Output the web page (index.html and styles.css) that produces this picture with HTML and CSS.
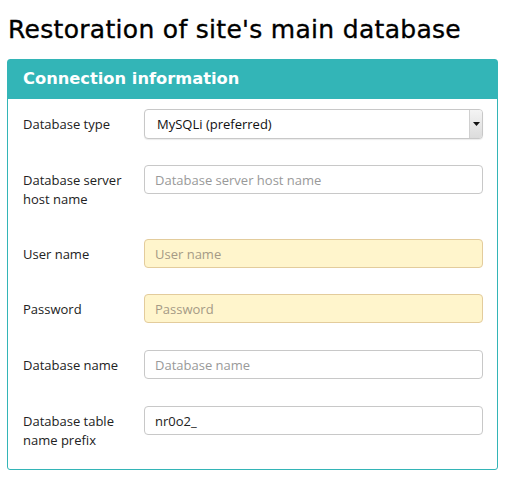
FILE: index.html
```html
<!DOCTYPE html>
<html>
<head>
<meta charset="utf-8">
<link rel="stylesheet" href="styles.css">
</head>
<body>
<h1 class="title">Restoration of site's main database</h1>
<div class="panel">
  <div class="panel-head">Connection information</div>
  <div class="panel-body">
    <div class="row">
      <label class="lbl">Database type</label>
      <div class="select-wrap">
        <select class="ctl select"><option>MySQLi (preferred)</option></select>
        <span class="arrow"><svg width="7" height="4" viewBox="0 0 7 4"><path d="M0 0H7L3.5 4Z" fill="#111"/></svg></span>
      </div>
    </div>
    <div class="row">
      <label class="lbl">Database server host name</label>
      <input class="ctl" placeholder="Database server host name">
    </div>
    <div class="row tight">
      <label class="lbl">User name</label>
      <input class="ctl warn" placeholder="User name">
    </div>
    <div class="row">
      <label class="lbl">Password</label>
      <input class="ctl warn" type="password" placeholder="Password">
    </div>
    <div class="row">
      <label class="lbl">Database name</label>
      <input class="ctl" placeholder="Database name">
    </div>
    <div class="row last">
      <label class="lbl">Database table name prefix</label>
      <input class="ctl" value="nr0o2_">
    </div>
  </div>
</div>
</body>
</html>
```
FILE: styles.css
```css
html, body { margin: 0; padding: 0; background: #fff; }
body { padding: 0 19px 0 7px; font-family: "Open Sans", sans-serif; color: #222; }
.title {
  margin: 0;
  padding: 15px 0 0 1px;
  height: 59px;
  box-sizing: border-box;
  font-family: "DejaVu Sans", sans-serif;
  font-weight: normal;
  font-size: 25px;
  letter-spacing: 0.3px;
  line-height: 30px;
  color: #000;
  -webkit-text-stroke: 0.35px #000;
}
.panel {
  border: 1px solid #33b5b7;
  border-radius: 3px;
  width: 491px;
  box-sizing: border-box;
}
.panel-head {
  background: #33b5b7;
  color: #fff;
  height: 39px;
  padding: 0 0 0 15px;
  font-family: "DejaVu Sans", sans-serif;
  font-weight: bold;
  font-size: 16.3px;
  line-height: 38px;
}
.panel-body { padding: 10px 14px 16px 15px; }
.row { display: flex; align-items: flex-start; margin-bottom: 27px; }
.row.tight { margin-bottom: 26px; }
.row.last { margin-bottom: 0; }
.lbl {
  width: 121px;
  flex: none;
  box-sizing: border-box;
  padding: 6px 20px 3px 0;
  font-size: 13px;
  line-height: 19px;
  color: #222;
}
.ctl {
  display: block;
  width: 339px;
  height: 29px;
  box-sizing: border-box;
  border: 1px solid #c8c8c8;
  border-radius: 4px;
  padding: 0 10px;
  font-family: "Open Sans", sans-serif;
  font-size: 13px;
  color: #222;
  background: #fff;
  outline: none;
}
.ctl::placeholder { color: #999; }
.warn { background: #fff5cc; border-color: #e3cc9c; }
.warn::placeholder { color: #a59a86; }
.select-wrap { position: relative; width: 339px; margin-bottom: -1px; }
.select {
  -webkit-appearance: none;
  appearance: none;
  height: 30px;
  padding-left: 12px;
  color: #111;
  border-color: #c8c8c8;
  box-shadow: 0 1px 1px rgba(0,0,0,0.08);
}
.arrow {
  position: absolute;
  right: 1px;
  top: 1px;
  width: 12px;
  height: 28px;
  border-left: 1px solid #d0d0d0;
  background: linear-gradient(#f4f4f4, #dcdcdc);
  border-radius: 0 3px 3px 0;
  display: flex;
  align-items: center;
  justify-content: center;
}
```
